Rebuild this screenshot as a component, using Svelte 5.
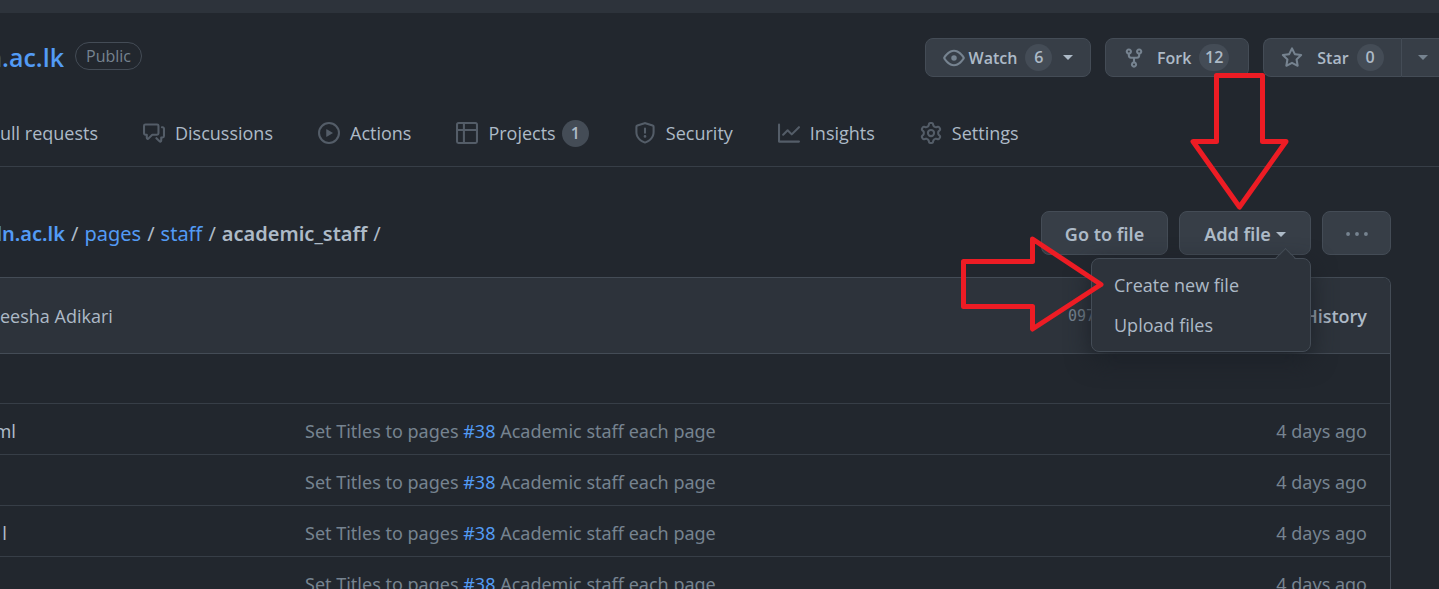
<script>
  const icons = {
    discussions: 'M1.5 2.75a.25.25 0 01.25-.25h8.5a.25.25 0 01.25.25v5.5a.25.25 0 01-.25.25h-3.5a.75.75 0 00-.53.22L3.5 11.44V9.25a.75.75 0 00-.75-.75h-1a.25.25 0 01-.25-.25v-5.5zM1.75 1A1.75 1.75 0 000 2.75v5.5C0 9.216.784 10 1.75 10H2v1.543a1.457 1.457 0 002.487 1.03L7.061 10h3.189A1.75 1.75 0 0012 8.25v-5.5A1.75 1.75 0 0010.25 1h-8.5zM14.5 4.75a.25.25 0 00-.25-.25h-.5a.75.75 0 110-1.5h.5c.966 0 1.75.784 1.75 1.75v5.5A1.75 1.75 0 0114.25 12H14v1.543a1.457 1.457 0 01-2.487 1.03L9.22 12.28a.75.75 0 111.06-1.06l2.22 2.22v-2.19a.75.75 0 01.75-.75h1a.25.25 0 00.25-.25v-5.5z',
    actions: 'M1.5 8a6.5 6.5 0 1113 0 6.5 6.5 0 01-13 0zM8 0a8 8 0 100 16A8 8 0 008 0zM6.379 5.227A.25.25 0 006 5.442v5.117a.25.25 0 00.379.214l4.264-2.559a.25.25 0 000-.428L6.379 5.227z',
    projects: 'M0 1.75C0 .784.784 0 1.75 0h12.5C15.216 0 16 .784 16 1.75v12.5A1.75 1.75 0 0114.25 16H1.75A1.75 1.75 0 010 14.25V1.75zM1.5 6.5v7.75c0 .138.112.25.25.25H5v-8H1.5zM5 5V1.5H1.75a.25.25 0 00-.25.25V5H5zm1.5 1.5v8h7.75a.25.25 0 00.25-.25V6.5h-8zm8-1.5V1.75a.25.25 0 00-.25-.25H6.5V5h8z',
    security: 'M7.467.133a1.75 1.75 0 011.066 0l5.25 1.68A1.75 1.75 0 0115 3.48V7c0 1.566-.32 3.182-1.303 4.682-.983 1.498-2.585 2.813-5.032 3.855a1.7 1.7 0 01-1.33 0c-2.447-1.042-4.049-2.357-5.032-3.855C1.32 10.182 1 8.566 1 7V3.48a1.75 1.75 0 011.217-1.667l5.25-1.68zm.61 1.429a.25.25 0 00-.153 0l-5.25 1.68a.25.25 0 00-.174.238V7c0 1.358.275 2.666 1.057 3.86.784 1.194 2.121 2.34 4.366 3.297a.2.2 0 00.154 0c2.245-.956 3.582-2.104 4.366-3.298C13.225 9.666 13.5 8.36 13.5 7V3.48a.25.25 0 00-.174-.237l-5.25-1.68zM9 10.5a1 1 0 11-2 0 1 1 0 012 0zm-.25-5.75a.75.75 0 10-1.5 0v3a.75.75 0 001.5 0v-3z',
    insights: 'M1.5 1.75a.75.75 0 00-1.5 0v12.5c0 .414.336.75.75.75h14.5a.75.75 0 000-1.5H1.5V1.75zm14.28 2.53a.75.75 0 00-1.06-1.06L10 7.94 7.53 5.47a.75.75 0 00-1.06 0L3.22 8.72a.75.75 0 001.06 1.06L7 7.06l2.47 2.47a.75.75 0 001.06 0l5.25-5.25z',
    settings: 'M7.429 1.525a6.593 6.593 0 011.142 0c.036.003.108.036.137.146l.289 1.105c.147.56.55.967.997 1.189.174.086.341.183.501.29.417.278.97.423 1.53.27l1.102-.303c.11-.03.175.016.195.046.219.31.41.641.573.989.014.031.022.11-.059.19l-.815.806c-.411.406-.562.957-.53 1.456a4.588 4.588 0 010 .582c-.032.499.119 1.05.53 1.456l.815.806c.08.08.073.159.059.19a6.494 6.494 0 01-.573.99c-.02.029-.086.074-.195.045l-1.103-.303c-.559-.153-1.112-.008-1.529.27-.16.107-.327.204-.5.29-.449.222-.851.628-.998 1.189l-.289 1.105c-.029.11-.101.143-.137.146a6.613 6.613 0 01-1.142 0c-.036-.003-.108-.037-.137-.146l-.289-1.105c-.147-.56-.55-.967-.997-1.189a4.502 4.502 0 01-.501-.29c-.417-.278-.97-.423-1.53-.27l-1.102.303c-.11.03-.175-.016-.195-.046a6.492 6.492 0 01-.573-.989c-.014-.031-.022-.11.059-.19l.815-.806c.411-.406.562-.957.53-1.456a4.587 4.587 0 010-.582c.032-.499-.119-1.05-.53-1.456l-.815-.806c-.08-.08-.073-.159-.059-.19a6.44 6.44 0 01.573-.99c.02-.029.086-.075.195-.045l1.103.303c.559.153 1.112.008 1.529-.27.16-.107.327-.204.5-.29.449-.222.851-.628.998-1.189l.289-1.105c.029-.11.101-.143.137-.146zM8 0c-.236 0-.47.01-.701.03-.743.065-1.29.615-1.458 1.261l-.29 1.106c-.017.066-.078.158-.211.224a5.994 5.994 0 00-.668.386c-.123.082-.233.09-.3.071L3.27 2.776c-.644-.177-1.392.02-1.82.63a7.977 7.977 0 00-.704 1.217c-.315.675-.111 1.422.363 1.891l.815.806c.05.048.098.147.088.294a6.084 6.084 0 000 .772c.01.147-.038.246-.088.294l-.815.806c-.474.469-.678 1.216-.363 1.891.2.428.436.835.704 1.218.428.609 1.176.806 1.82.63l1.103-.303c.066-.019.176-.011.299.071.213.143.436.272.668.386.133.066.194.158.212.224l.289 1.106c.169.646.715 1.196 1.458 1.26a8.094 8.094 0 001.402 0c.743-.064 1.29-.614 1.458-1.26l.29-1.106c.017-.066.078-.158.211-.224a5.98 5.98 0 00.668-.386c.123-.082.233-.09.3-.071l1.102.302c.644.177 1.392-.02 1.82-.63.268-.382.505-.789.704-1.217.315-.675.111-1.422-.364-1.891l-.814-.806c-.05-.048-.098-.147-.088-.294a6.1 6.1 0 000-.772c-.01-.147.039-.246.088-.294l.814-.806c.475-.469.679-1.216.364-1.891a7.992 7.992 0 00-.704-1.218c-.428-.609-1.176-.806-1.82-.63l-1.103.303c-.066.019-.176.011-.299-.071a5.991 5.991 0 00-.668-.386c-.133-.066-.194-.158-.212-.224L10.16 1.29C9.99.645 9.444.095 8.701.031A8.094 8.094 0 008 0zm1.5 8a1.5 1.5 0 11-3 0 1.5 1.5 0 013 0zM11 8a3 3 0 11-6 0 3 3 0 016 0z',
    eye: 'M1.679 7.932c.412-.621 1.242-1.75 2.366-2.717C5.175 4.242 6.527 3.5 8 3.5c1.473 0 2.824.742 3.955 1.715 1.124.967 1.954 2.096 2.366 2.717a.119.119 0 010 .136c-.412.621-1.242 1.75-2.366 2.717C10.825 11.758 9.473 12.5 8 12.5c-1.473 0-2.824-.742-3.955-1.715C2.92 9.818 2.09 8.69 1.679 8.068a.119.119 0 010-.136zM8 2c-1.981 0-3.67.992-4.933 2.078C1.797 5.169.88 6.423.43 7.1a1.619 1.619 0 000 1.798c.45.678 1.367 1.932 2.637 3.024C4.329 13.008 6.019 14 8 14c1.981 0 3.67-.992 4.933-2.078 1.27-1.091 2.187-2.345 2.637-3.023a1.619 1.619 0 000-1.798c-.45-.678-1.367-1.932-2.637-3.023C11.671 2.992 9.981 2 8 2zm0 8a2 2 0 100-4 2 2 0 000 4z',
    fork: 'M5 3.25a.75.75 0 11-1.5 0 .75.75 0 011.5 0zm0 2.122a2.25 2.25 0 10-1.5 0v.878A2.25 2.25 0 005.75 8.5h1.5v2.128a2.251 2.251 0 101.5 0V8.5h1.5a2.25 2.25 0 002.25-2.25v-.878a2.25 2.25 0 10-1.5 0v.878a.75.75 0 01-.75.75h-4.5A.75.75 0 015 6.25v-.878zm3.75 7.378a.75.75 0 11-1.5 0 .75.75 0 011.5 0zm3-8.75a.75.75 0 100-1.5.75.75 0 000 1.5z',
    star: 'M8 .25a.75.75 0 01.673.418l1.882 3.815 4.21.612a.75.75 0 01.416 1.279l-3.046 2.97.719 4.192a.75.75 0 01-1.088.791L8 12.347l-3.766 1.98a.75.75 0 01-1.088-.79l.72-4.194L.818 6.374a.75.75 0 01.416-1.28l4.21-.611L7.327.668A.75.75 0 018 .25zm0 2.445L6.615 5.5a.75.75 0 01-.564.41l-3.097.45 2.24 2.184a.75.75 0 01.216.664l-.528 3.084 2.769-1.456a.75.75 0 01.698 0l2.77 1.456-.53-3.084a.75.75 0 01.216-.664l2.24-2.183-3.096-.45a.75.75 0 01-.564-.41L8 2.694v.001z',
    dots: 'M1.5 6.6a1.4 1.4 0 100 2.8 1.4 1.4 0 000-2.8zM8 6.6a1.4 1.4 0 100 2.8 1.4 1.4 0 000-2.8zM14.5 6.6a1.4 1.4 0 100 2.8 1.4 1.4 0 000-2.8z'
  };
  const tabs = [
    { label: 'Discussions', icon: 'discussions' },
    { label: 'Actions', icon: 'actions' },
    { label: 'Projects', icon: 'projects', count: 1 },
    { label: 'Security', icon: 'security' },
    { label: 'Insights', icon: 'insights' },
    { label: 'Settings', icon: 'settings' }
  ];
  const files = [
    { name: 'ml', width: 16 },
    { name: '', width: 0 },
    { name: 'l', width: 7 },
    { name: '', width: 0 }
  ];
</script>

{#snippet icon(name)}
  <svg class="icon" viewBox="0 0 16 16" aria-hidden="true"><path fill-rule="evenodd" d={icons[name]} /></svg>
{/snippet}

<div class="page">
  <div class="topbar"></div>
  <header>
    <div class="title-row">
      <div class="repo"><a href="#repo">n.ac.lk</a></div>
      <span class="label">Public</span>
      <div class="social">
        <button class="btn small watch">{@render icon('eye')}Watch<span class="count">6</span><i class="caret"></i></button>
        <button class="btn small fork">{@render icon('fork')}Fork<span class="count">12</span></button>
        <div class="group">
          <button class="btn small star">{@render icon('star')}Star<span class="count">0</span></button>
          <button class="btn small more" aria-label="Lists"><i class="caret"></i></button>
        </div>
      </div>
    </div>
    <nav>
      <a href="#pulls">ull requests</a>
      {#each tabs as tab}
        <a href="#{tab.icon}">{@render icon(tab.icon)}{tab.label}{#if tab.count}<span class="count">{tab.count}</span>{/if}</a>
      {/each}
    </nav>
  </header>

  <main>
    <div class="path-row">
      <div class="crumbs">
        <div class="root"><a href="#root">ln.ac.lk</a></div><span>/</span><a href="#pages">pages</a><span>/</span><a href="#staff">staff</a><span>/</span><strong>academic_staff</strong><span>/</span>
      </div>
      <div class="actions">
        <button class="btn goto">Go to file</button>
        <div class="dropdown">
          <button class="btn add">Add file<i class="caret"></i></button>
          <div class="menu">
            <a href="#new">Create new file</a>
            <a href="#upload">Upload files</a>
          </div>
        </div>
        <button class="btn kebab" aria-label="More options">{@render icon('dots')}</button>
      </div>
    </div>

    <section class="box">
      <div class="commit">
        <span>eesha Adikari</span>
        <a class="sha" href="#commit">097</a>
        <a class="history" href="#history">History</a>
      </div>
      <table>
        <tbody>
          <tr class="parent"><td class="name"></td><td></td><td></td></tr>
          {#each files as file}
            <tr>
              <td class="name"><div class="clip" style="width: {file.width}px">{file.name}</div></td>
              <td>Set Titles to pages <a href="#38">#38</a> Academic staff each page</td>
              <td class="age">4 days ago</td>
            </tr>
          {/each}
        </tbody>
      </table>
    </section>
  </main>

  <svg class="arrows" width="500" height="340" aria-hidden="true">
    <path d="M277.5 75.5H323.5V141.5H347L300.5 207L254 141.5H277.5Z" />
    <path d="M24.5 261.5H93.5V239L162 284.5L93.5 329V306.5H24.5Z" />
  </svg>
</div>

<style>
  :global(body) { margin: 0; background: #22272e; }
  * { box-sizing: border-box; }
  .page {
    position: relative; height: 100vh; overflow: hidden;
    background: #22272e; color: #adbac7;
    font: 18px/28px "Open Sans", "Noto Sans", sans-serif;
  }
  a { color: inherit; text-decoration: none; }
  .icon { width: 22px; height: 22px; flex: none; fill: #768390; }
  .topbar { height: 13px; background: #2d333b; }

  header { border-bottom: 1px solid #373e47; }
  .title-row { display: flex; align-items: flex-start; height: 88px; padding-top: 25px; }
  .repo { display: flex; justify-content: flex-end; width: 64px; overflow: hidden; font-size: 25px; line-height: 38px; font-weight: 600; }
  .repo a, .crumbs a, td a { color: #539bf5; }
  .label {
    margin: 4px 0 0 11px; padding: 0 10px; border: 1px solid #444c56; border-radius: 14px;
    color: #768390; font-size: 16px; line-height: 26px; font-weight: 500;
  }
  .social { display: flex; gap: 14px; margin-left: auto; margin-right: -8px; }
  .group { display: flex; }

  .btn {
    display: flex; align-items: center; justify-content: center; height: 44px; padding: 2px 22px 0;
    border: 1px solid #444c56; border-radius: 8px; background: #373e47; color: #adbac7;
    font: 600 18px "Noto Sans", sans-serif; white-space: nowrap;
  }
  .small { height: 39px; padding: 0 17px; font: 600 16px "Open Sans", sans-serif; }
  .count {
    display: inline-flex; justify-content: center; min-width: 27px; height: 27px; padding: 0 9px;
    border-radius: 14px; background: #444c56; font-size: 16px; line-height: 27px; font-weight: 600;
  }
  .small .count { margin-left: 8px; }
  .watch { width: 166px; }
  .watch .icon { margin-right: 4px; }
  .fork { width: 144px; padding-right: 19px; }
  .fork .icon { margin-right: 12px; }
  .star { width: 138px; border-radius: 8px 0 0 8px; border-right: 0; }
  .star .icon { margin-right: 14px; }
  .more { width: 46px; border-radius: 0 8px 8px 0; padding-right: 19px; }
  .caret { border: 5px solid transparent; border-top-color: currentColor; border-bottom: 0; }
  .watch .caret { margin-left: 11px; }
  .add .caret { margin-left: 5px; }
  .more .caret { color: #768390; }

  nav { display: flex; align-items: center; gap: 45px; height: 65px; padding-bottom: 1px; }
  nav a { display: flex; align-items: center; gap: 10px; white-space: nowrap; }
  nav .icon { fill: #545d68; }
  nav .count { margin-left: -4px; }

  main { padding: 44px 48px 0 0; }
  .path-row { display: flex; align-items: center; justify-content: space-between; }
  .crumbs { display: flex; gap: 6px; padding-top: 2px; font-family: "Noto Sans", sans-serif; font-size: 20px; white-space: nowrap; }
  .root { display: flex; justify-content: flex-end; width: 65px; overflow: hidden; }
  .root, strong { font-weight: 600; }
  .actions { display: flex; gap: 11px; }
  .dropdown { position: relative; }
  .goto { width: 127px; }
  .add { width: 132px; }
  .kebab { width: 69px; }
  .menu {
    position: absolute; z-index: 1; top: 47px; right: 0; width: 220px; padding: 6px 0;
    border: 1px solid #444c56; border-radius: 8px; background: #2d333b;
    box-shadow: 0 8px 24px #1c2128;
  }
  .menu::before {
    content: ""; position: absolute; top: -8px; right: 17px; width: 14px; height: 14px;
    border: 1px solid #444c56; border-right: 0; border-bottom: 0; background: linear-gradient(135deg, #2d333b 50%, transparent 50%);
    transform: rotate(45deg);
  }
  .menu a { display: block; padding: 0 22px; line-height: 40px; }

  .box { margin-top: 22px; border: 1px solid #444c56; border-left: 0; border-radius: 0 8px 0 0; }
  .commit {
    display: flex; align-items: center; height: 76px; padding-right: 23px;
    border-bottom: 1px solid #444c56; border-radius: 0 7px 0 0; background: #2d333b;
  }
  .sha { width: 241px; margin-left: auto; color: #768390; font: 15px "DejaVu Sans Mono", monospace; }
  .history { width: 58px; display: flex; justify-content: flex-end; font-weight: 600; }
  table { width: 100%; border-collapse: collapse; color: #768390; font-family: "Noto Sans", sans-serif; }
  tr { height: 51px; }
  tr.parent { height: 49px; }
  tr + tr { border-top: 1px solid #373e47; }
  td { padding: 4px 0 0; }
  .name { width: 305px; color: #adbac7; }
  .clip { display: flex; justify-content: flex-end; overflow: hidden; }
  .age { padding-right: 23px; text-align: right; }

  .arrows { position: absolute; z-index: 2; top: 0; right: 0; fill: none; stroke: #ed1c24; stroke-width: 5; stroke-linejoin: round; pointer-events: none; }
</style>
